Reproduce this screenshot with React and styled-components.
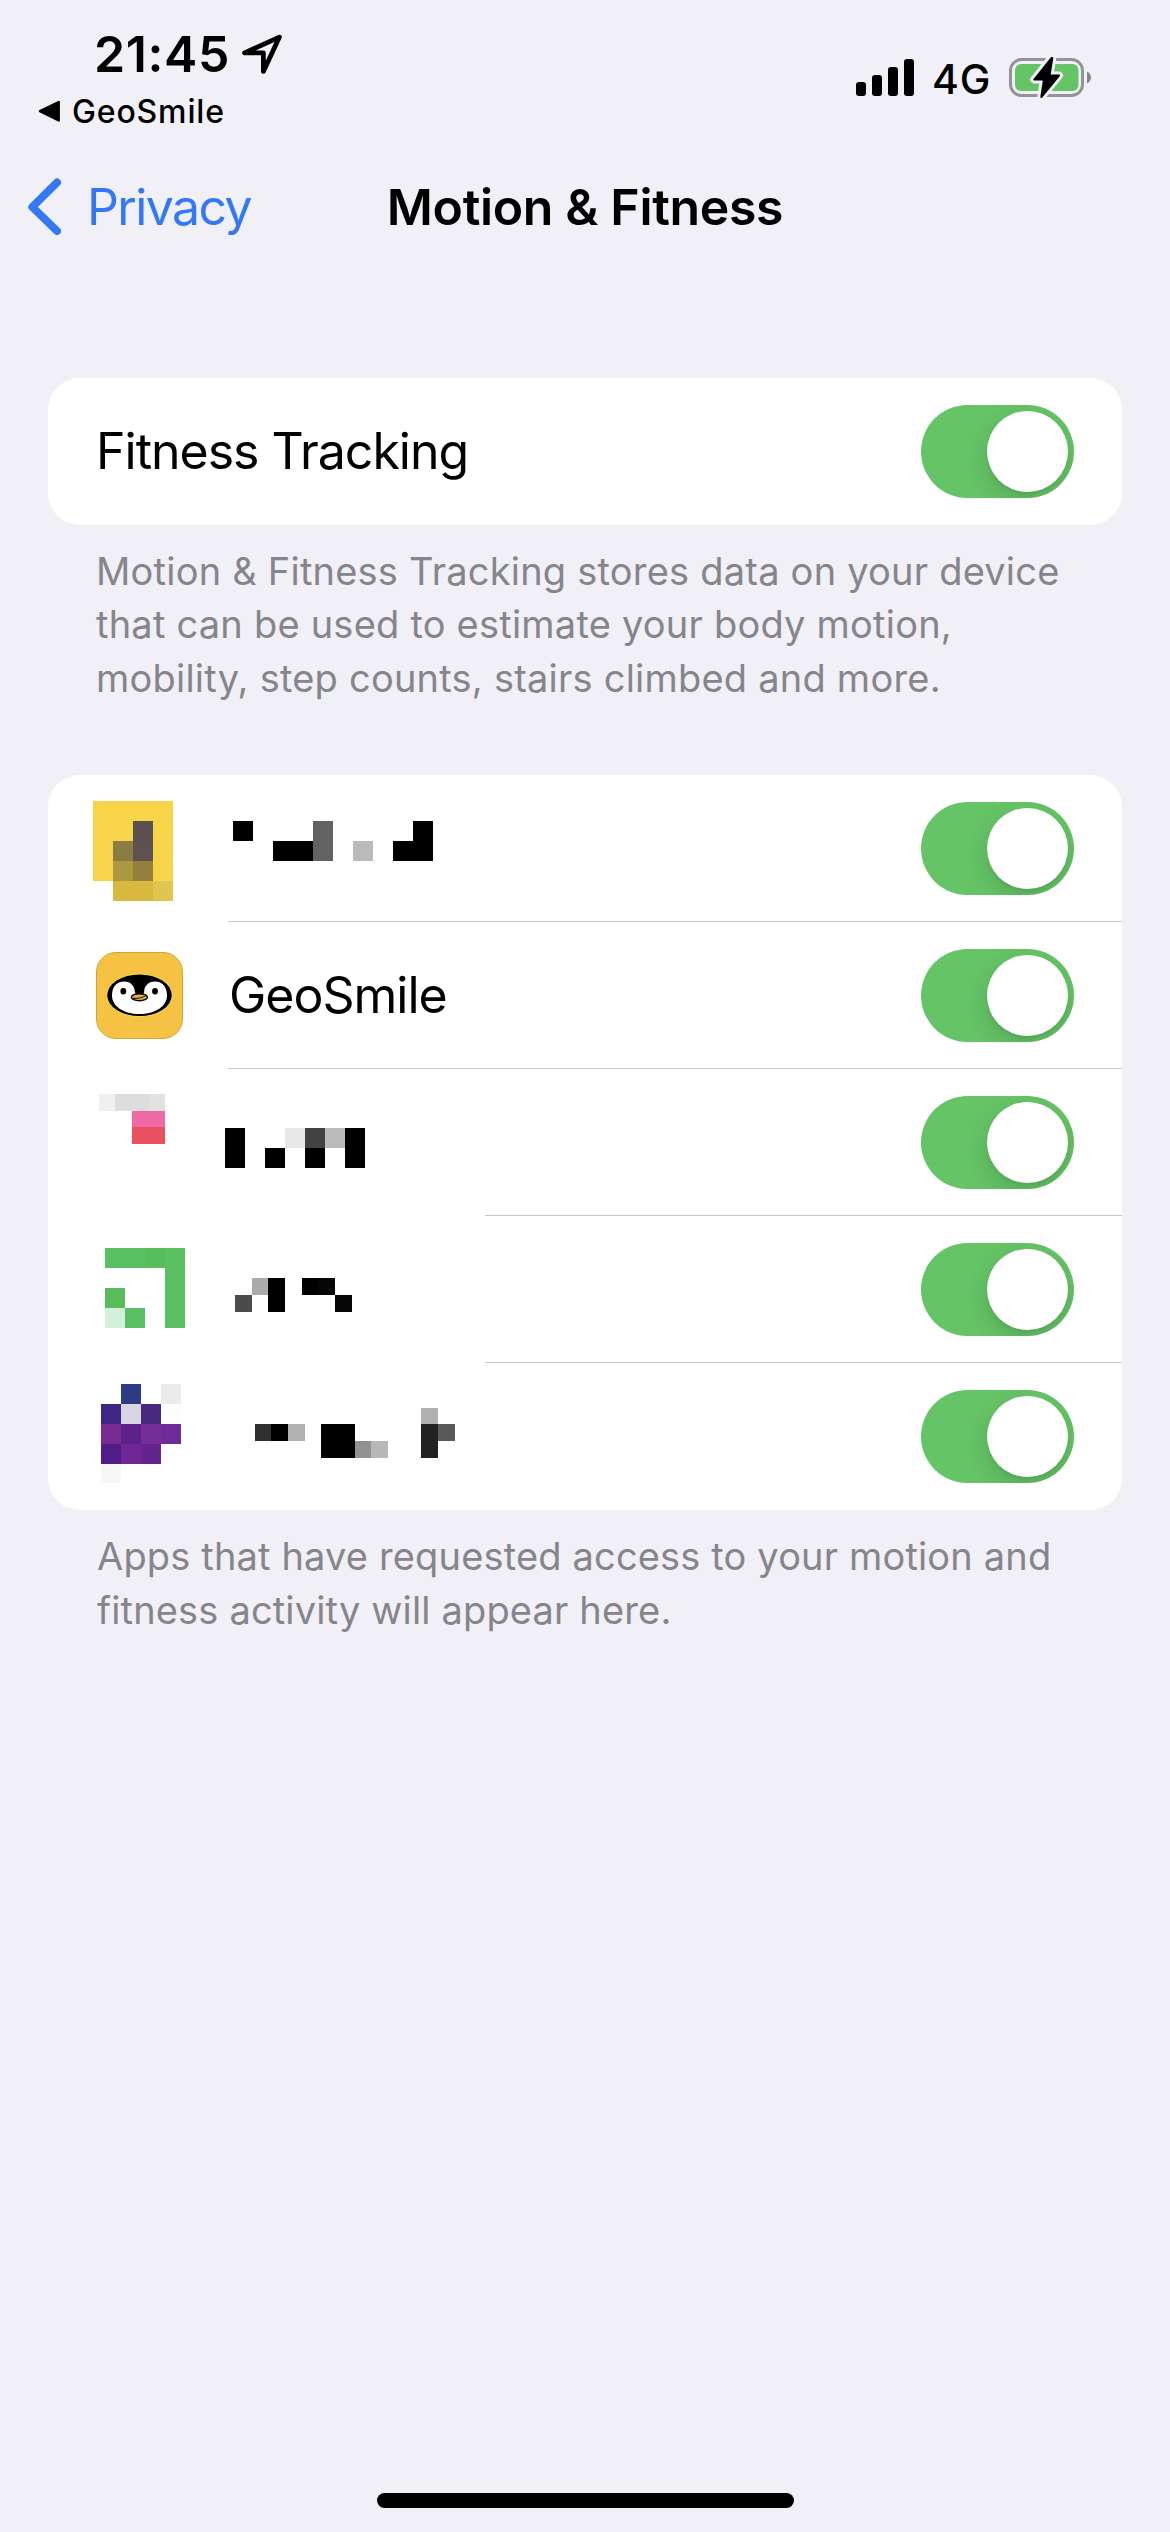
import { useState } from "react";
import styled, { createGlobalStyle } from "styled-components";

const GlobalStyle = createGlobalStyle`
  * {
    box-sizing: border-box;
  }

  body {
    margin: 0;
    background-color: #f1f0f6;
    font-family: Inter, "Liberation Sans", sans-serif;
    color: #000;
  }
`;

const Screen = styled.div`
  display: flex;
  flex-direction: column;
  width: 1170px;
  height: 2532px;
  background-color: #f1f0f6;
`;

const StatusBar = styled.header`
  display: flex;
  justify-content: space-between;
  height: 141px;
  padding: 24px 79px 0 38px;
`;

const Clock = styled.div`
  display: flex;
  gap: 11px;
  padding-left: 56px;
  font-size: 50px;
  font-weight: 600;
  line-height: 60px;
  letter-spacing: 0.6px;
`;

const BackToApp = styled.div`
  display: flex;
  gap: 12px;
  margin-top: 8px;
  font-size: 32px;
  font-weight: 500;
  line-height: 39px;
  letter-spacing: 0.85px;
`;

const StatusIcons = styled.div`
  display: flex;
  align-items: flex-start;
  padding-top: 30px;
`;

const Network = styled.span`
  width: 77px;
  margin-left: 18px;
  font-size: 41px;
  font-weight: 500;
  line-height: 50px;
  letter-spacing: 0.8px;
`;

const NavBar = styled.nav`
  display: grid;
  grid-template-columns: 1fr auto 1fr;
  align-items: center;
  height: 132px;
  padding: 0 28px;
`;

const BackLink = styled.a`
  display: flex;
  align-items: center;
  gap: 26px;
  color: #3478f6;
  font-size: 50px;
  line-height: 60px;
  letter-spacing: -1.6px;
`;

const Title = styled.h1`
  margin: 0;
  font-size: 50px;
  font-weight: 600;
  line-height: 60px;
  letter-spacing: -0.34px;
`;

const Content = styled.main`
  display: flex;
  flex-direction: column;
  flex: 1;
  padding: 105px 48px 0;
`;

const Card = styled.section`
  background-color: #fff;
  border-radius: 32px;
`;

const Row = styled.div`
  display: flex;
  align-items: center;
  height: 147px;
  padding: 0 48px;
`;

const Divider = styled.div`
  height: 1px;
  margin-top: -1px;
  margin-left: ${(props) => props.$inset}px;
  background-color: #c6c6c8;
`;

const IconSlot = styled.div`
  display: flex;
  align-items: center;
  width: 87px;
  height: 147px;
  margin-right: 45px;
`;

const RowLabel = styled.span`
  flex: 1;
  padding: 0 0 1px ${(props) => props.$indent || 0}px;
  font-size: 50px;
  line-height: 60px;
  letter-spacing: -1px;
`;

const LabelSlot = styled.div`
  flex: 1;
  height: 147px;
`;

const Note = styled.p`
  height: ${(props) => props.$height}px;
  margin: 0;
  padding: ${(props) => props.$top}px 0 0 ${(props) => props.$left || 48}px;
  color: #86858b;
  font-size: 38px;
  line-height: 53.5px;
  letter-spacing: ${(props) => props.$spacing}px;
  white-space: nowrap;
`;

const Switch = styled.button`
  display: flex;
  justify-content: ${(props) => (props.$on ? "flex-end" : "flex-start")};
  align-items: center;
  width: 153px;
  height: 93px;
  padding: 6px;
  border: none;
  border-radius: 47px;
  background-color: ${(props) => (props.$on ? "#65c466" : "#e9e9eb")};
  overflow: hidden;
  cursor: pointer;
`;

const Knob = styled.span`
  width: 81px;
  height: 81px;
  border-radius: 50%;
  background-color: #fff;
  box-shadow: 0 9px 24px rgba(0, 0, 0, 0.15), 0 3px 3px rgba(0, 0, 0, 0.04);
`;

const Mosaic = styled.svg`
  display: block;
  overflow: visible;
`;

const HomeIndicator = styled.div`
  width: 417px;
  height: 15px;
  margin: 0 auto 24px;
  border-radius: 8px;
  background-color: #000;
`;

// cells: [x, y, width, height, color], measured from the top left of the slot
const apps = [
  {
    id: 1,
    icon: [
      [-3, 26, 80, 80, "#f8d548"],
      [37, 46, 20, 20, "#5c504f"],
      [37, 66, 20, 20, "#5e5150"],
      [17, 66, 20, 20, "#8b7d42"],
      [17, 86, 20, 20, "#ac983f"],
      [37, 86, 20, 20, "#94803f"],
      [17, 106, 40, 20, "#d8b83d"],
      [57, 106, 20, 20, "#e0c64f"],
    ],
    label: [
      [5, 46, 20, 20, "#000"],
      [45, 66, 40, 20, "#000"],
      [85, 46, 20, 40, "#626262"],
      [125, 66, 20, 20, "#bababa"],
      [165, 66, 40, 20, "#000"],
      [185, 46, 20, 20, "#000"],
    ],
    inset: 180,
  },
  { id: 2, name: "GeoSmile", inset: 180 },
  {
    id: 3,
    icon: [
      [3, 25, 16, 17, "#f0f0f0"],
      [19, 25, 34, 17, "#ddd"],
      [53, 25, 16, 17, "#e2e2e2"],
      [36, 42, 33, 16, "#ef69a5"],
      [36, 58, 33, 17, "#ea515f"],
    ],
    label: [
      [-3, 59, 20, 40, "#000"],
      [37, 79, 20, 20, "#000"],
      [57, 59, 20, 20, "#e8e8e8"],
      [77, 59, 20, 20, "#424242"],
      [77, 79, 20, 20, "#000"],
      [97, 59, 20, 20, "#bababa"],
      [117, 59, 20, 40, "#000"],
    ],
    inset: 437,
  },
  {
    id: 4,
    icon: [
      [9, 32, 80, 20, "#5bc062"],
      [49, 32, 20, 20, "#57bc5a"],
      [69, 52, 20, 60, "#5bc062"],
      [9, 72, 20, 20, "#58bc5a"],
      [9, 92, 20, 20, "#d3f0da"],
      [29, 92, 20, 20, "#5bc062"],
    ],
    label: [
      [24, 62, 16, 17, "#ababab"],
      [40, 62, 17, 34, "#000"],
      [7, 79, 17, 17, "#4b4b4b"],
      [74, 62, 16, 17, "#000"],
      [90, 62, 17, 17, "#060606"],
      [107, 79, 17, 17, "#060606"],
    ],
    inset: 437,
  },
  {
    id: 5,
    icon: [
      [25, 21, 20, 20, "#2c3b84"],
      [65, 21, 20, 20, "#ebebeb"],
      [5, 41, 20, 20, "#3f2684"],
      [25, 41, 20, 20, "#d8d4e4"],
      [45, 41, 20, 20, "#48297f"],
      [65, 41, 20, 20, "#fdfdfd"],
      [5, 61, 20, 20, "#772b92"],
      [25, 61, 20, 20, "#5c218b"],
      [45, 61, 20, 20, "#752e98"],
      [65, 61, 20, 20, "#6f2c99"],
      [5, 81, 20, 20, "#4f1c89"],
      [25, 81, 20, 20, "#712696"],
      [45, 81, 20, 20, "#652390"],
      [5, 101, 20, 19, "#f7f7f7"],
    ],
    label: [
      [27, 61, 16, 17, "#303030"],
      [43, 61, 17, 17, "#000"],
      [60, 61, 17, 17, "#b2b2b2"],
      [93, 61, 34, 34, "#000"],
      [127, 78, 16, 17, "#929292"],
      [143, 78, 17, 17, "#b8b8b8"],
      [193, 45, 17, 16, "#b0b0b0"],
      [193, 61, 17, 34, "#222"],
      [210, 61, 17, 17, "#595959"],
    ],
  },
];

const Cells = ({ cells, width }) => (
  <Mosaic width={width} height="147" shapeRendering="crispEdges">
    {cells.map(([x, y, w, h, fill]) => (
      <rect key={`${x}-${y}`} x={x} y={y} width={w} height={h} fill={fill} />
    ))}
  </Mosaic>
);

const LocationIcon = () => (
  <svg width="44" height="60" viewBox="241 24 44 60">
    <path
      d="M279.4 37.1 244.6 52.9H263.4V71.4Z"
      fill="none"
      stroke="#000"
      strokeWidth="4.8"
      strokeLinejoin="round"
    />
  </svg>
);

const BackTriangle = () => (
  <svg width="22" height="39" viewBox="38 92 22 39">
    <path d="M40 111.2 58.7 102V120.5Z" stroke="#000" strokeWidth="2.4" strokeLinejoin="round" />
  </svg>
);

const SignalIcon = () => (
  <svg width="58" height="50" viewBox="856 54 58 50">
    <rect x="856" y="82" width="10" height="14" rx="3" />
    <rect x="872" y="75" width="10" height="21" rx="3" />
    <rect x="888" y="67" width="10" height="29" rx="3" />
    <rect x="904" y="59" width="10" height="37" rx="3" />
  </svg>
);

const BatteryIcon = () => (
  <svg width="82" height="50" viewBox="1009 54 82 50">
    <rect x="1010.5" y="59.5" width="72" height="36" rx="11" fill="none" stroke="#949398" strokeWidth="3" />
    <path d="M1087 71.5C1089.5 72.5 1091 75 1091 77.5S1089.5 82.5 1087 83.5Z" fill="#86858b" />
    <rect x="1015" y="64" width="63.5" height="27" rx="6" fill="#65c466" />
    <path
      d="M1051.5 58 1034.3 79.5H1044L1041.3 97 1059 75.5H1049.5L1052.3 58Z"
      fill="#f1f0f6"
      stroke="#f1f0f6"
      strokeWidth="8"
      strokeLinejoin="round"
    />
    <path
      d="M1051.5 58 1034.3 79.5H1044L1041.3 97 1059 75.5H1049.5L1052.3 58Z"
      stroke="#000"
      strokeWidth="2"
      strokeLinejoin="round"
    />
  </svg>
);

const Chevron = () => (
  <svg width="33" height="58" viewBox="0 0 33 58">
    <path
      d="M29 4.5 4.3 29 29 53"
      fill="none"
      stroke="#3478f6"
      strokeWidth="8"
      strokeLinecap="round"
      strokeLinejoin="round"
    />
  </svg>
);

const PenguinIcon = () => (
  <svg width="87" height="87" viewBox="0 0 87 87">
    <rect x="0.5" y="0.5" width="86" height="86" rx="19.5" fill="#f5c243" stroke="#cfa43c" />
    <ellipse cx="43.5" cy="43.3" rx="33.3" ry="21.7" fill="#f6e02e" />
    <ellipse cx="43.5" cy="43.3" rx="32.3" ry="20.8" fill="#000" />
    <path
      d="M43.5 62C28 62 16 54.5 16 43.5C16 35 20.5 29.5 28 29.5C35 29.5 38.8 34.5 38.8 39.5L40 43H47L48.2 39.5C48.2 34.5 52 29.5 59 29.5C66.5 29.5 71 35 71 43.5C71 54.5 59 62 43.5 62Z"
      fill="#fff"
    />
    <ellipse cx="27.3" cy="39.3" rx="2.9" ry="3.3" />
    <ellipse cx="59" cy="39.3" rx="2.9" ry="3.3" />
    <ellipse cx="43.4" cy="45.2" rx="8" ry="3.5" fill="#e2ac56" stroke="#000" strokeWidth="1.4" />
    <path d="M37 46.2C41 46.8 46 46 49.5 43.8" fill="none" stroke="#000" strokeWidth="0.9" />
  </svg>
);

const Toggle = ({ label }) => {
  const [on, setOn] = useState(true);

  return (
    <Switch type="button" role="switch" aria-checked={on} aria-label={label} $on={on} onClick={() => setOn(!on)}>
      <Knob />
    </Switch>
  );
};

const AppRow = ({ app }) => (
  <>
    <Row>
      <IconSlot>{app.icon ? <Cells cells={app.icon} width="87" /> : <PenguinIcon />}</IconSlot>
      {app.name ? (
        <RowLabel $indent={1}>{app.name}</RowLabel>
      ) : (
        <LabelSlot>
          <Cells cells={app.label} width="257" />
        </LabelSlot>
      )}
      <Toggle label={app.name} />
    </Row>
    {app.inset && <Divider $inset={app.inset} />}
  </>
);

const App = () => {
  return (
    <Screen>
      <GlobalStyle />
      <StatusBar>
        <div>
          <Clock>
            21:45
            <LocationIcon />
          </Clock>
          <BackToApp>
            <BackTriangle />
            GeoSmile
          </BackToApp>
        </div>
        <StatusIcons>
          <SignalIcon />
          <Network>4G</Network>
          <BatteryIcon />
        </StatusIcons>
      </StatusBar>
      <NavBar>
        <BackLink>
          <Chevron />
          Privacy
        </BackLink>
        <Title>Motion &amp; Fitness</Title>
      </NavBar>
      <Content>
        <Card>
          <Row>
            <RowLabel>Fitness Tracking</RowLabel>
            <Toggle label="Fitness Tracking" />
          </Row>
        </Card>
        <Note $height={250} $top={19.5} $spacing={0.22}>
          Motion &amp; Fitness Tracking stores data on your device
          <br />
          that can be used to estimate your body motion,
          <br />
          mobility, step counts, stairs climbed and more.
        </Note>
        <Card>
          {apps.map((app) => (
            <AppRow key={app.id} app={app} />
          ))}
        </Card>
        <Note $height={140} $top={20} $left={49} $spacing={0.16}>
          Apps that have requested access to your motion and
          <br />
          fitness activity will appear here.
        </Note>
      </Content>
      <HomeIndicator />
    </Screen>
  );
};

export default App;
